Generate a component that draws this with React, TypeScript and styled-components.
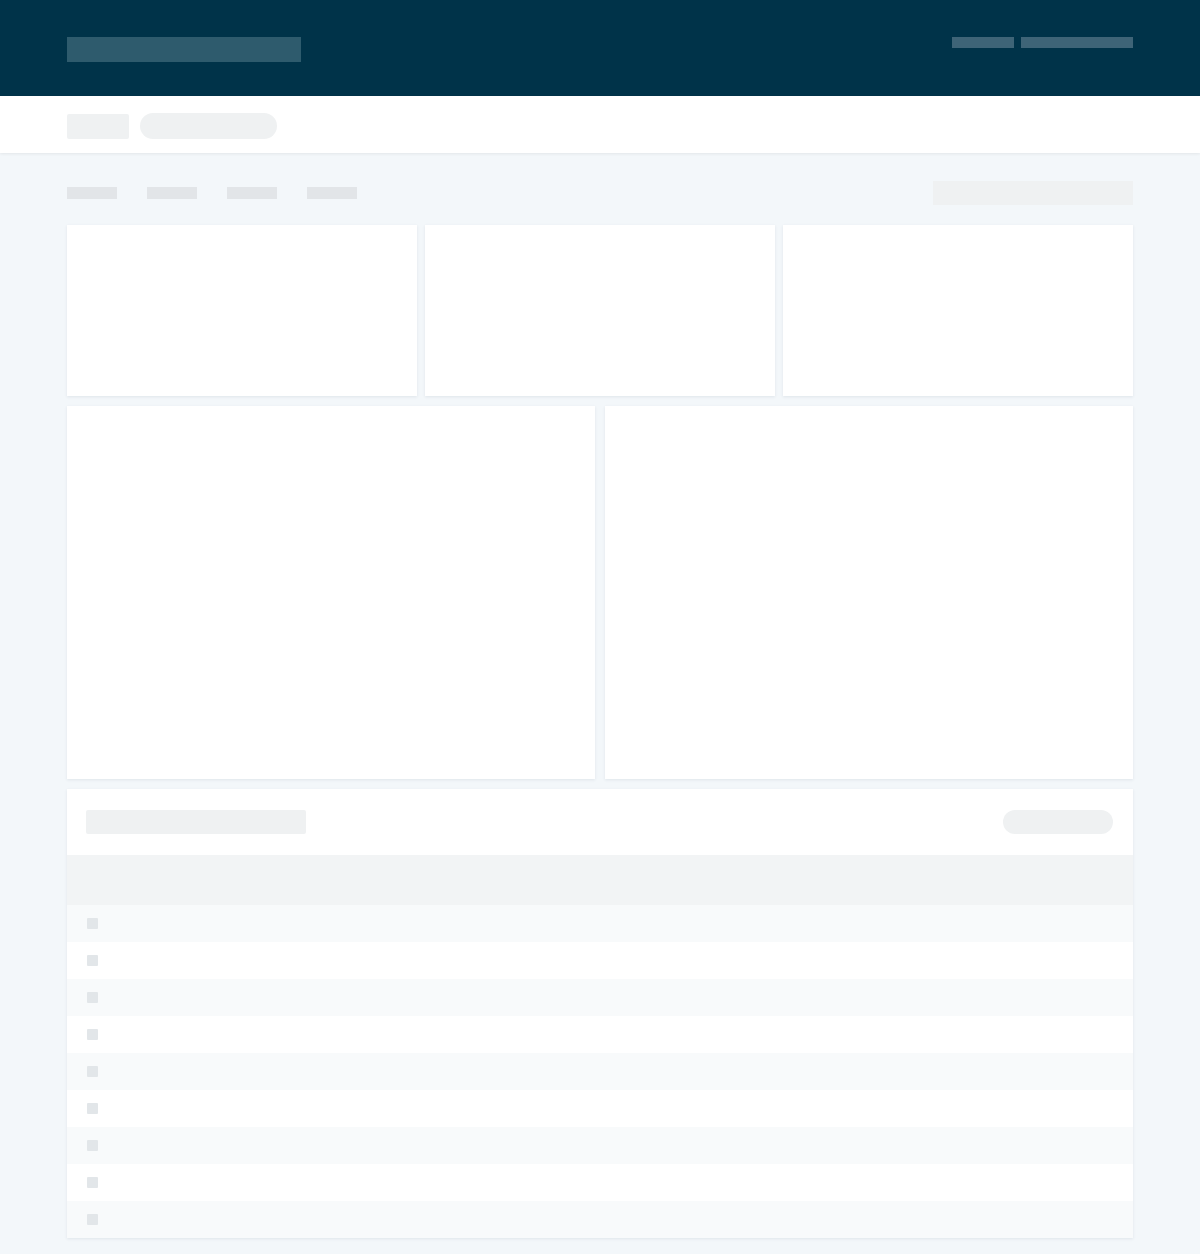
import React from 'react';
import styled, { createGlobalStyle } from 'styled-components';

const GlobalStyle = createGlobalStyle`
  html, body {
    margin: 0;
    padding: 0;
    background: #f3f7fa;
    font-family: "Liberation Sans", Arial, sans-serif;
  }
`

const Page = styled.div`
  min-height: 1254px;
  background: #f3f7fa;
`

const Inner = styled.div`
  width: 1066px;
  margin: 0 auto;
`

const Header = styled.header`
  height: 96px;
  background: #003349;
`

const HeaderInner = styled(Inner)`
  display: flex;
  justify-content: space-between;
  align-items: flex-start;
  padding-top: 37px;
  box-sizing: border-box;
  height: 100%;
`

const Logo = styled.div`
  width: 234px;
  height: 25px;
  background: #2e5b6d;
`

const HeaderLinks = styled.div`
  display: flex;
  gap: 7px;
`

const HeaderLink = styled.div<{ $w: number }>`
  width: ${p => p.$w}px;
  height: 11px;
  background: #3e6477;
`

const SubBar = styled.div`
  height: 57px;
  background: #fff;
  box-shadow: 0 1px 3px rgba(0, 0, 0, 0.07);
  position: relative;
`

const SubInner = styled(Inner)`
  display: flex;
  align-items: center;
  gap: 11px;
  padding-top: 17px;
`

const Block = styled.div<{ $w: number; $h?: number; $round?: boolean }>`
  width: ${p => p.$w}px;
  height: ${p => p.$h ?? 25}px;
  border-radius: ${p => (p.$round ? '13px' : '2px')};
  background: #eff1f2;
`

const Toolbar = styled(Inner)`
  display: flex;
  justify-content: space-between;
  align-items: center;
  padding: 28px 0 20px;
`

const Tabs = styled.div`
  display: flex;
  gap: 30px;
`

const Tab = styled.div`
  width: 50px;
  height: 12px;
  background: #e2e5e8;
`

const Search = styled.div`
  width: 200px;
  height: 24px;
  background: #eff1f2;
`

const Grid = styled(Inner)<{ $cols: number; $gap: number; $h: number }>`
  display: grid;
  grid-template-columns: repeat(${p => p.$cols}, 1fr);
  column-gap: ${p => p.$gap}px;
  margin-bottom: 10px;

  & > div {
    height: ${p => p.$h}px;
  }
`

const Card = styled.div`
  background: #fff;
  box-shadow: 0 1px 3px rgba(30, 60, 80, 0.09);
`

const TableCard = styled(Card)`
  width: 1066px;
  margin: 0 auto;
`

const TableTop = styled.div`
  display: flex;
  justify-content: space-between;
  align-items: center;
  height: 66px;
  padding: 0 20px 0 19px;
  box-sizing: border-box;
`

const TableHead = styled.div`
  height: 50px;
  background: #f2f4f5;
`

const Row = styled.div<{ $alt: boolean }>`
  height: 37px;
  display: flex;
  align-items: center;
  padding-left: 20px;
  background: ${p => (p.$alt ? '#f8fafb' : '#fff')};
`

const Check = styled.div`
  width: 11px;
  height: 11px;
  border-radius: 1px;
  background: #e2e6e9;
`

export default function App() {
  const rows = Array.from({ length: 9 }, (_, i) => i);
  return (
    <Page>
      <GlobalStyle />
      <Header>
        <HeaderInner>
          <Logo />
          <HeaderLinks>
            <HeaderLink $w={62} />
            <HeaderLink $w={112} />
          </HeaderLinks>
        </HeaderInner>
      </Header>
      <SubBar>
        <SubInner>
          <Block $w={62} />
          <Block $w={137} $h={26} $round />
        </SubInner>
      </SubBar>
      <Toolbar>
        <Tabs>
          <Tab />
          <Tab />
          <Tab />
          <Tab />
        </Tabs>
        <Search />
      </Toolbar>
      <Grid $cols={3} $gap={8} $h={171}>
        <Card />
        <Card />
        <Card />
      </Grid>
      <Grid $cols={2} $gap={10} $h={373}>
        <Card />
        <Card />
      </Grid>
      <TableCard>
        <TableTop>
          <Block $w={220} $h={24} />
          <Block $w={110} $h={24} $round />
        </TableTop>
        <TableHead />
        {rows.map(i => (
          <Row key={i} $alt={i % 2 === 0}>
            <Check />
          </Row>
        ))}
      </TableCard>
    </Page>
  );
}
